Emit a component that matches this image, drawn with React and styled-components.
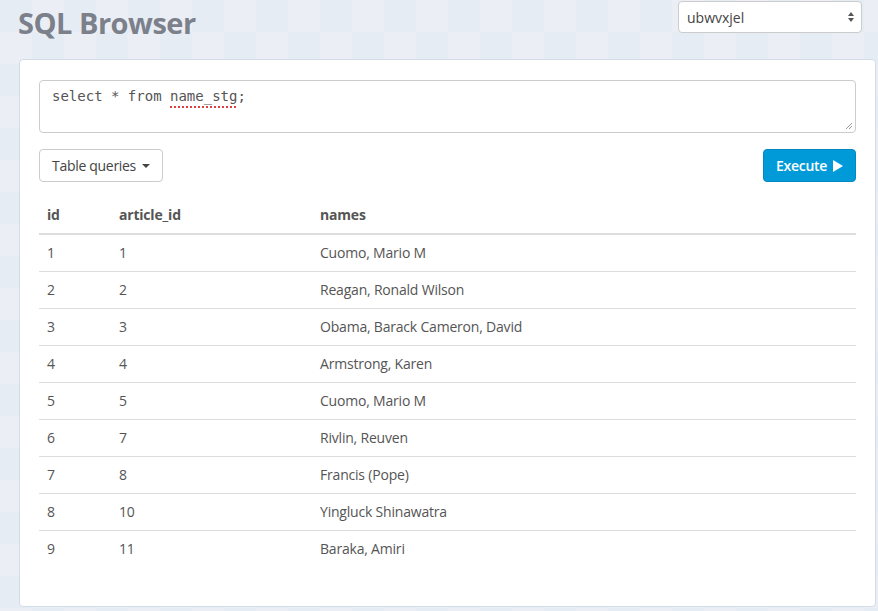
import React from "react";
import styled, { createGlobalStyle } from "styled-components";

const rows = [
  [1, 1, "Cuomo, Mario M"],
  [2, 2, "Reagan, Ronald Wilson"],
  [3, 3, "Obama, Barack Cameron, David"],
  [4, 4, "Armstrong, Karen"],
  [5, 5, "Cuomo, Mario M"],
  [6, 7, "Rivlin, Reuven"],
  [7, 8, "Francis (Pope)"],
  [8, 10, "Yingluck Shinawatra"],
  [9, 11, "Baraka, Amiri"],
];

const GlobalStyle = createGlobalStyle`
  html, body {
    margin: 0;
    padding: 0;
  }
  body {
    font-family: "Open Sans", "Noto Sans", sans-serif;
    font-size: 14px;
    color: #555;
    background-color: #e6ecf3;
    background-image:
      linear-gradient(45deg, rgba(255,255,255,0.18) 25%, transparent 25%, transparent 75%, rgba(255,255,255,0.18) 75%),
      linear-gradient(45deg, rgba(255,255,255,0.18) 25%, transparent 25%, transparent 75%, rgba(255,255,255,0.18) 75%);
    background-size: 64px 64px;
    background-position: 0 0, 32px 32px;
  }
`;

const Page = styled.div`
  width: 878px;
  height: 611px;
  box-sizing: border-box;
  padding: 0 2px 0 19px;
  display: flex;
  flex-direction: column;
`;

const Header = styled.div`
  height: 59px;
  display: flex;
  justify-content: space-between;
  align-items: flex-start;
`;

const Title = styled.h1`
  margin: 4px 0 0 -1px;
  font-size: 29px;
  font-weight: 700;
  line-height: 38px;
  color: #7b808b;
  letter-spacing: -0.5px;
`;

const DbSelect = styled.div`
  margin: 1px 14px 0 0;
  width: 184px;
  height: 32px;
  box-sizing: border-box;
  background: #fff;
  border: 1px solid #ccc;
  border-radius: 4px;
  display: flex;
  align-items: center;
  justify-content: space-between;
  padding: 0 6px 0 8px;
  font-size: 14px;
  color: #444;
`;

const Panel = styled.div`
  width: 857px;
  height: 548px;
  box-sizing: border-box;
  background: #fff;
  border: 1px solid #d3dde8;
  border-radius: 4px;
  padding: 20px 19px 20px 19px;
`;

const Editor = styled.div`
  height: 53px;
  box-sizing: border-box;
  border: 1px solid #ccc;
  border-radius: 4px;
  padding: 7px 12px;
  font-family: "DejaVu Sans Mono", "Liberation Mono", monospace;
  font-size: 14px;
  color: #555;
  position: relative;
`;

const Misspelled = styled.span`
  text-decoration: underline dotted #e04040;
  text-decoration-thickness: 2px;
  text-underline-offset: 5px;
`;

const Grip = styled.svg`
  position: absolute;
  right: 2px;
  bottom: 2px;
`;

const Toolbar = styled.div`
  margin-top: 16px;
  display: flex;
  justify-content: space-between;
`;

const Button = styled.button`
  height: 33px;
  box-sizing: border-box;
  padding: 0 12px;
  border-radius: 4px;
  font-family: inherit;
  font-size: 14px;
  letter-spacing: -0.3px;
  display: flex;
  align-items: center;
  gap: 5px;
  border: 1px solid ${(p) => (p.$primary ? "#0388c4" : "#ccc")};
  background: ${(p) => (p.$primary ? "#019ad9" : "#fff")};
  color: ${(p) => (p.$primary ? "#fff" : "#444")};
  font-weight: ${(p) => (p.$primary ? 600 : 400)};
`;

const Caret = styled.span`
  width: 0;
  height: 0;
  border-left: 4px solid transparent;
  border-right: 4px solid transparent;
  border-top: 4px solid #444;
  margin-left: 1px;
`;

const Play = styled.span`
  width: 0;
  height: 0;
  border-top: 6px solid transparent;
  border-bottom: 6px solid transparent;
  border-left: 10px solid #fff;
  margin-left: 1px;
`;

const Table = styled.table`
  margin-top: 15px;
  width: 100%;
  border-collapse: collapse;
  font-size: 14px;
`;

const Th = styled.th`
  text-align: left;
  font-weight: 700;
  padding: 8px 8px;
  line-height: 20px;
  border-bottom: 2px solid #ddd;
  color: #555;
  letter-spacing: -0.2px;
  width: ${(p) => p.$w || "auto"};
`;

const Td = styled.td`
  padding: 8px 8px;
  line-height: 20px;
  border-top: ${(p) => (p.$first ? "none" : "1px solid #ddd")};
  color: #555;
  letter-spacing: -0.2px;
`;

export default function App() {
  return (
    <>
      <GlobalStyle />
      <Page>
        <Header>
          <Title>SQL Browser</Title>
          <DbSelect>
            <span>ubwvxjel</span>
            <svg width="8" height="12" viewBox="0 0 8 12">
              <path d="M4 1 L7 5 L1 5 Z" fill="#555" />
              <path d="M4 11 L7 7 L1 7 Z" fill="#555" />
            </svg>
          </DbSelect>
        </Header>
        <Panel>
          <Editor>
            select * from <Misspelled>name_stg</Misspelled>;
            <Grip width="8" height="8" viewBox="0 0 8 8">
              <path d="M7 1 L1 7 M7 4 L4 7" stroke="#999" strokeWidth="1" />
            </Grip>
          </Editor>
          <Toolbar>
            <Button>
              Table queries <Caret />
            </Button>
            <Button $primary>
              Execute <Play />
            </Button>
          </Toolbar>
          <Table>
            <thead>
              <tr>
                <Th $w="56px">id</Th>
                <Th $w="185px">article_id</Th>
                <Th>names</Th>
              </tr>
            </thead>
            <tbody>
              {rows.map((r, i) => (
                <tr key={r[0]}>
                  <Td $first={i === 0}>{r[0]}</Td>
                  <Td $first={i === 0}>{r[1]}</Td>
                  <Td $first={i === 0}>{r[2]}</Td>
                </tr>
              ))}
            </tbody>
          </Table>
        </Panel>
      </Page>
    </>
  );
}
